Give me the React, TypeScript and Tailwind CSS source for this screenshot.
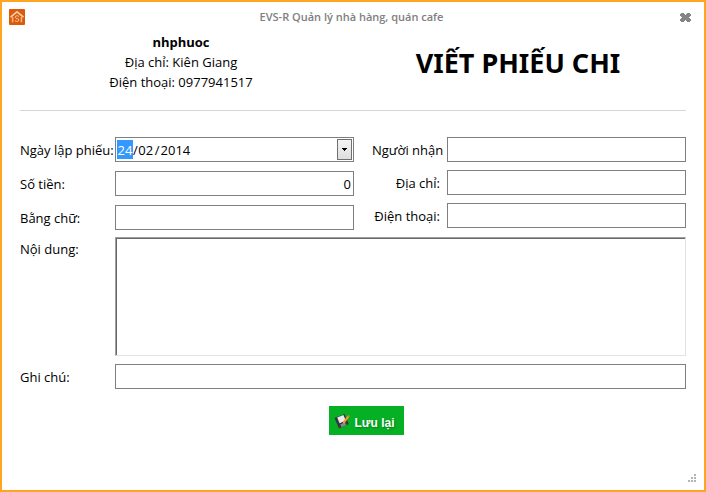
import type { ReactNode } from "react";

const fieldBox = "h-[25px] min-w-0 flex-1 border border-[#7f7f7f] bg-white px-0.5 outline-none";

function Field({ id, label, value = "", numeric = false }: { id: string; label: string; value?: string; numeric?: boolean }) {
  return (
    <div className="flex items-center">
      <label htmlFor={id} className="w-[95px] shrink-0">{label}</label>
      <input id={id} type="text" defaultValue={value} className={`${fieldBox} ${numeric ? "text-right" : ""}`} />
    </div>
  );
}

function PersonField({ id, label }: { id: string; label: string }) {
  return (
    <div className="flex items-center">
      <label htmlFor={id} className="w-[75px] shrink-0 pr-[7px] text-right whitespace-nowrap">{label}</label>
      <input id={id} type="text" className={fieldBox} />
    </div>
  );
}

function DateField() {
  return (
    <div className="flex items-center">
      <label htmlFor="day" className="w-[95px] shrink-0 whitespace-nowrap">Ngày lập phiếu:</label>
      <div className="flex h-[25px] min-w-0 flex-1 items-center border border-[#7f7f7f] bg-white p-px">
        <input id="day" aria-label="Ngày" defaultValue="24" className="h-[19px] w-4 bg-[#3399ff] text-center text-white outline-none" />
        <span>/</span>
        <input aria-label="Tháng" defaultValue="02" className="h-[19px] w-4 text-center outline-none" />
        <span className="px-px">/</span>
        <input aria-label="Năm" defaultValue="2014" className="h-[19px] w-8 outline-none" />
        <button type="button" aria-label="Mở lịch" className="ml-auto flex h-[21px] w-[15px] items-center justify-center border border-[#707070] bg-gradient-to-b from-[#f4f4f4] to-[#dedede]">
          <svg width="5" height="3" viewBox="0 0 5 3" shapeRendering="crispEdges"><path d="M0 0h5v1H4v1H3v1H2V2H1V1H0z" /></svg>
        </button>
      </div>
    </div>
  );
}

function HouseIcon() {
  return (
    <svg width="16" height="16" viewBox="0 0 16 16" fill="none">
      <rect width="16" height="16" rx="1" fill="#dc5a08" />
      <path d="M1.5 8.2 8 2.8l6.5 5.4" stroke="#f8cfae" strokeWidth="1.7" />
      <path d="M3.6 8v5.2M12.4 8v5.2" stroke="#f3b78e" strokeWidth="1.5" />
      <path d="M10 7.4C8.5 6.3 6 6.8 6.2 8.3c.2 1.6 3.6.9 3.7 2.7.1 1.5-2.5 1.9-4 .7" stroke="#f7c9a8" strokeWidth="1" />
    </svg>
  );
}

function SaveIcon() {
  return (
    <svg width="16" height="16" viewBox="0 0 16 16">
      <path d="M0.5 5 10.5 1 14.8 11 5 15.6z" fill="#34383c" />
      <path d="M3.2 4.6 9.4 2 11.8 7.6 5.6 10.2z" fill="#e9ecef" />
      <path d="M6.4 11.6 11 9.6 12.4 12 7.4 14.2z" fill="#858b91" />
      <path d="M8.6 10.8 9.2 8.6 13.6 2.8 15.2 4 10.8 10z" fill="#f59a22" />
      <path d="M13.6 2.8 14.3 1.9 16 3.1 15.2 4z" fill="#e8702a" />
    </svg>
  );
}

function HeaderBlock({ children }: { children: ReactNode }) {
  return <div className="flex flex-col items-center justify-center">{children}</div>;
}

export default function App() {
  return (
    <main className="flex min-h-screen flex-col border-2 border-[#ffa51f] bg-white font-['Open_Sans','Noto_Sans',sans-serif] text-[13px] leading-5 text-black">
      <div className="flex h-[30px] items-center justify-between pr-2.5 pl-[7px]">
        <HouseIcon />
        <h2 className="text-[11px] font-semibold text-[#808080]">EVS-R Quản lý nhà hàng, quán cafe</h2>
        <button type="button" aria-label="Đóng" className="flex h-4 w-4 items-center justify-center">
          <svg width="11" height="9" viewBox="0 0 11 9" fill="#858585" shapeRendering="crispEdges">
            <path d="M1 0h3v1h1v1h1V1h1V0h3v1h1v2h-1v1H9v1h1v1h1v2h-1v1H7V8H6V7H5v1H4v1H1V8H0V6h1V5h1V4H1V3H0V1h1z" />
          </svg>
        </button>
      </div>

      <div className="flex flex-1 flex-col px-[18px]">
        <header className="grid h-[79px] grid-cols-[322fr_336fr] gap-x-2 border-b border-[#d5d5d5] pb-[18px]">
          <HeaderBlock>
            <p className="font-bold">nhphuoc</p>
            <p>Địa chỉ: Kiên Giang</p>
            <p>Điện thoại: 0977941517</p>
          </HeaderBlock>
          <HeaderBlock>
            <h1 className="pt-0.5 font-['Noto_Sans',sans-serif] text-[27px] leading-8 font-bold">VIẾT PHIẾU CHI</h1>
          </HeaderBlock>
        </header>

        <form className="flex flex-col pt-[26px]">
          <div className="grid grid-cols-[334fr_314fr] gap-x-[18px]">
            <div className="flex flex-col gap-[9px]">
              <DateField />
              <Field id="amount" label="Số tiền:" value="0" numeric />
              <Field id="words" label="Bằng chữ:" />
            </div>
            <div className="flex flex-col gap-2">
              <PersonField id="receiver" label="Người nhận" />
              <PersonField id="address" label="Địa chỉ:" />
              <PersonField id="phone" label="Điện thoại:" />
            </div>
          </div>

          <div className="mt-[7px] flex">
            <label htmlFor="content" className="w-[95px] shrink-0 pt-0.5">Nội dung:</label>
            <textarea id="content" className="h-[119px] min-w-0 flex-1 resize-none border border-t-[#a0a0a0] border-r-[#e3e3e3] border-b-[#e3e3e3] border-l-[#a0a0a0] outline-none [box-shadow:inset_1px_1px_0_#696969]" />
          </div>
          <div className="mt-2">
            <Field id="note" label="Ghi chú:" />
          </div>

          <div className="mt-[17px] flex justify-center pl-[27px]">
            <button type="button" className="flex h-[29px] items-center gap-1 bg-[#06b025] pr-[9px] pl-[5px] font-['Liberation_Sans',sans-serif] text-[12px] font-bold text-white [text-shadow:1px_1px_2px_#067a1a]">
              <SaveIcon />
              <span className="pt-1">Lưu lại</span>
            </button>
          </div>
        </form>
      </div>

      <div className="flex justify-end pr-2 pb-2">
        <svg width="8" height="8" viewBox="0 0 8 8" fill="#b5b5b5" shapeRendering="crispEdges">
          <path d="M6 0h2v2H6zM3 3h2v2H3zM6 3h2v2H6zM0 6h2v2H0zM3 6h2v2H3zM6 6h2v2H6z" />
        </svg>
      </div>
    </main>
  );
}
